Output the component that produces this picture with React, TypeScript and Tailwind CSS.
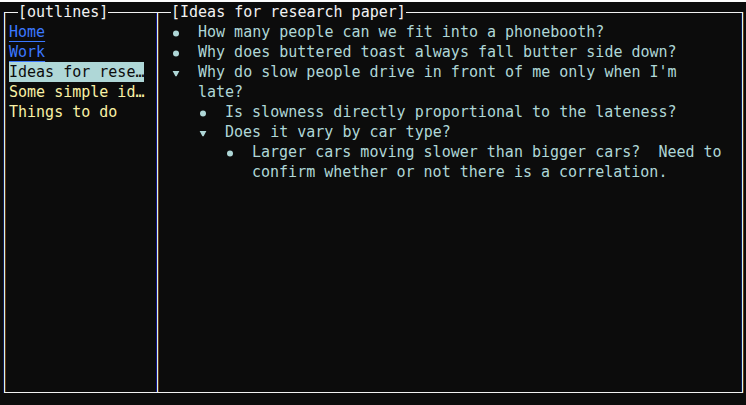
import type { ReactNode } from "react";

type OutlineNode = {
  text: string;
  children?: OutlineNode[];
};

const links = ["Home", "Work"];

const outlines = [
  { title: "Ideas for rese…", selected: true },
  { title: "Some simple id…", selected: false },
  { title: "Things to do", selected: false },
];

const nodes: OutlineNode[] = [
  { text: "How many people can we fit into a phonebooth?" },
  { text: "Why does buttered toast always fall butter side down?" },
  {
    text: "Why do slow people drive in front of me only when I'm late?",
    children: [
      { text: "Is slowness directly proportional to the lateness?" },
      {
        text: "Does it vary by car type?",
        children: [
          {
            text: "Larger cars moving slower than bigger cars?  Need to confirm whether or not there is a correlation.",
          },
        ],
      },
    ],
  },
];

function Panel({
  title,
  className,
  children,
}: {
  title: string;
  className: string;
  children: ReactNode;
}) {
  return (
    <fieldset
      className={`border-y border-l border-y-[#f2f2f2] border-x-[#d5f5ea] ${className}`}
    >
      <legend className="ml-[13px] h-5 text-[#f2f2f2]">[{title}]</legend>
      {children}
    </fieldset>
  );
}

function Bullet() {
  return (
    <svg className="h-5 w-[9px] shrink-0" viewBox="0 0 9 20" aria-hidden="true">
      <circle cx="5" cy="11.5" r="3" fill="currentColor" />
    </svg>
  );
}

function Toggle({ label }: { label: string }) {
  return (
    <button type="button" aria-expanded="true" aria-label={label} className="h-5 w-[9px] shrink-0">
      <svg className="h-5 w-[9px]" viewBox="0 0 9 20" aria-hidden="true">
        <path d="M1.6 9H8.4L5.6 14.2H4.4Z" fill="currentColor" />
      </svg>
    </button>
  );
}

function Tree({ items }: { items: OutlineNode[] }) {
  return (
    <ul>
      {items.map((item) => (
        <li key={item.text}>
          <div className="flex gap-[18px]">
            {item.children ? <Toggle label={item.text} /> : <Bullet />}
            <p className="whitespace-pre-wrap">{item.text}</p>
          </div>
          {item.children && (
            <div className="pl-[27px]">
              <Tree items={item.children} />
            </div>
          )}
        </li>
      ))}
    </ul>
  );
}

export default function App() {
  return (
    <main className="flex min-h-screen border-t-2 border-[#fdfdfd] bg-[#0c0c0c] pr-[3px] pb-3 pl-1 font-['DejaVu_Sans_Mono',monospace] text-[15px] leading-5">
      <Panel
        title="outlines"
        className="w-[153px] shrink-0 shadow-[-1px_0_0_#0b1a5c,inset_1px_0_0_#6b3a14,inset_-1px_0_0_#12128a]"
      >
        <nav className="flex flex-col items-start pl-1">
          {links.map((name) => (
            <a
              key={name}
              href={`#${name.toLowerCase()}`}
              className="text-[#3b78ff] underline decoration-1 underline-offset-4"
            >
              {name}
            </a>
          ))}
          {outlines.map((outline) => (
            <button
              key={outline.title}
              type="button"
              className={
                outline.selected
                  ? "whitespace-nowrap bg-[#afd7d7] text-[#0c0c0c]"
                  : "whitespace-nowrap text-[#f9f1a5]"
              }
            >
              {outline.title}
            </button>
          ))}
        </nav>
      </Panel>
      <Panel
        title="Ideas for research paper"
        className="min-w-0 flex-1 border-r shadow-[1px_0_0_#6b3a14,inset_1px_0_0_#6b3a14,inset_-1px_0_0_#0b1a5c]"
      >
        <div className="pr-[18px] pl-[13px] text-[#afd7d7]">
          <Tree items={nodes} />
        </div>
      </Panel>
    </main>
  );
}
